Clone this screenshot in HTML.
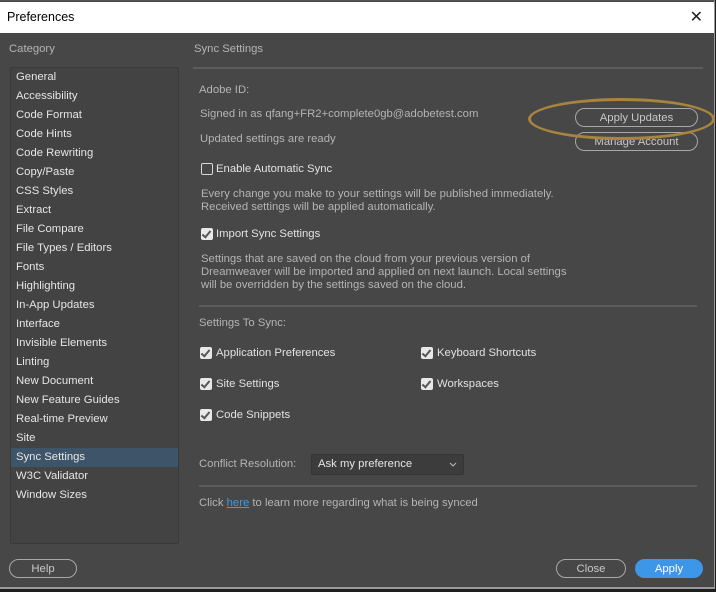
<!DOCTYPE html>
<html><head><style>
*{margin:0;padding:0;box-sizing:border-box}
body{width:716px;height:592px;background:#1e1e1e;font-family:"Liberation Sans",sans-serif;font-size:11.3px;position:relative;overflow:hidden}
.win{position:absolute;left:0;top:0;width:715px;height:589px;background:#474747;border-right:1px solid #9a9a9a;border-bottom:2px solid #9a9a9a;border-top:1px solid #555}
.title{position:absolute;left:0;top:1px;width:714px;height:31px;background:#fff;color:#000;font-size:12.5px;padding:8px 0 0 7px}
.x{position:absolute;right:11px;top:5px;font-size:16px;color:#222}
.a{position:absolute;white-space:nowrap}
.g{color:#b4b4b4}
.w{color:#e2e2e2}
.list{position:absolute;left:10px;top:66px;width:169px;height:477px;background:#434343;border:1px solid #3a3a3a;border-radius:2px}
.list div{height:19px;line-height:18px;padding-left:5px;color:#e6e6e6}
.list .sel{background:#3e5468}
.sep{position:absolute;height:2px;background:#5b5b5b}
.cb{position:absolute;width:12px;height:12px;border-radius:2px}
.cb.on{background:#e8e8e8}
.cb.on::after{content:"";position:absolute;left:3px;top:1px;width:3px;height:7px;border:solid #555;border-width:0 2px 2px 0;transform:rotate(40deg)}
.cb.off{border:1px solid #d8d8d8}
.btn{position:absolute;border:1px solid #a8a8a8;border-radius:10px;color:#c8c8c8;text-align:center;line-height:18px}
</style></head><body>
<div class="win">
<div class="title">Preferences<span class="x">✕</span></div>
<div class="a g" style="left:9px;top:42px">Category</div>
<div class="a g" style="left:194px;top:42px">Sync Settings</div>
<div class="list">
<div>General</div><div>Accessibility</div><div>Code Format</div><div>Code Hints</div><div>Code Rewriting</div><div>Copy/Paste</div><div>CSS Styles</div><div>Extract</div><div>File Compare</div><div>File Types / Editors</div><div>Fonts</div><div>Highlighting</div><div>In-App Updates</div><div>Interface</div><div>Invisible Elements</div><div>Linting</div><div>New Document</div><div>New Feature Guides</div><div>Real-time Preview</div><div>Site</div><div class="sel">Sync Settings</div><div>W3C Validator</div><div>Window Sizes</div>
</div>
<div class="sep" style="left:193px;top:66px;width:510px"></div>
<div class="a g" style="left:199px;top:83px">Adobe ID:</div>
<div class="a g" style="left:200px;top:107px">Signed in as qfang+FR2+complete0gb@adobetest.com</div>
<div class="a g" style="left:200px;top:132px">Updated settings are ready</div>
<div class="btn" style="left:575px;top:107px;width:123px;height:19px">Apply Updates</div>
<div class="btn" style="left:575px;top:131px;width:123px;height:19px">Manage Account</div>
<div class="a" style="left:528px;top:97px;width:187px;height:42px;border:3px solid #a8843f;border-radius:50%"></div>
<div class="cb off" style="left:201px;top:162px"></div>
<div class="a w" style="left:216px;top:162px">Enable Automatic Sync</div>
<div class="a g" style="left:201px;top:187px;line-height:13px">Every change you make to your settings will be published immediately.<br>Received settings will be applied automatically.</div>
<div class="cb on" style="left:201px;top:227px"></div>
<div class="a w" style="left:216px;top:227px">Import Sync Settings</div>
<div class="a g" style="left:201px;top:252px;line-height:13px">Settings that are saved on the cloud from your previous version of<br>Dreamweaver will be imported and applied on next launch. Local settings<br>will be overridden by the settings saved on the cloud.</div>
<div class="sep" style="left:199px;top:304px;width:498px"></div>
<div class="a g" style="left:199px;top:316px">Settings To Sync:</div>
<div class="cb on" style="left:200px;top:346px"></div><div class="a w" style="left:216px;top:346px">Application Preferences</div>
<div class="cb on" style="left:421px;top:346px"></div><div class="a w" style="left:437px;top:346px">Keyboard Shortcuts</div>
<div class="cb on" style="left:200px;top:377px"></div><div class="a w" style="left:216px;top:377px">Site Settings</div>
<div class="cb on" style="left:421px;top:377px"></div><div class="a w" style="left:437px;top:377px">Workspaces</div>
<div class="cb on" style="left:200px;top:408px"></div><div class="a w" style="left:216px;top:408px">Code Snippets</div>
<div class="a g" style="left:199px;top:457px">Conflict Resolution:</div>
<div class="a" style="left:311px;top:453px;width:153px;height:21px;background:#3c3c3c;border:1px solid #353535;border-radius:2px;color:#e6e6e6;padding:3px 0 0 6px">Ask my preference<svg style="position:absolute;right:6px;top:7px" width="8" height="5" viewBox="0 0 8 5"><path d="M1 1l3 3 3-3" fill="none" stroke="#bbb" stroke-width="1"/></svg></div>
<div class="sep" style="left:199px;top:484px;width:498px"></div>
<div class="a g" style="left:199px;top:496px">Click <span style="color:#3d9be8;text-decoration:underline">here</span> to learn more regarding what is being synced</div>
<div class="btn" style="left:9px;top:558px;width:68px;height:19px">Help</div>
<div class="btn" style="left:556px;top:558px;width:70px;height:19px">Close</div>
<div class="btn" style="left:635px;top:558px;width:68px;height:19px;background:#3d96e8;border-color:#3d96e8;color:#fff">Apply</div>
</div>
</body></html>
